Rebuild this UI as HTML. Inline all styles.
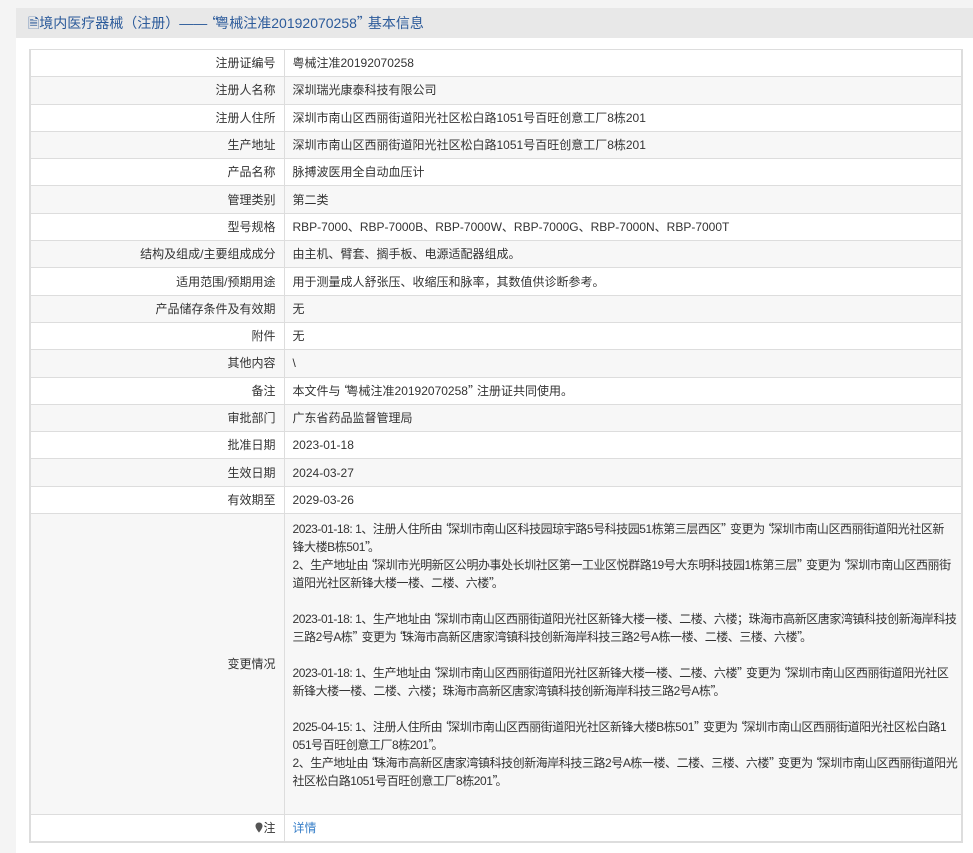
<!DOCTYPE html>
<html><head><meta charset="utf-8"><style>
body{margin:0;background:#f4f4f4;font-family:"Liberation Sans","Noto Sans CJK SC",sans-serif;font-size:12px;color:#333;width:973px;height:853px;overflow:hidden}
.q{font-family:"Noto Sans CJK SC",sans-serif;letter-spacing:-3px}
.o{margin-left:-3px}
.panel{position:absolute;left:16px;top:8px;width:957px;height:845px;background:#fff}
.hd{height:30px;background:#e8e8e8;color:#2b5a9a;font-size:14px;line-height:30px;padding-left:12px}
table{position:absolute;left:13px;top:41px;width:934px;border-collapse:collapse;border:2px solid #ddd;border-top:1px solid #ddd;table-layout:fixed}
td{border:1px solid #ddd;height:26.3px;padding:0 8px;vertical-align:middle;white-space:nowrap;line-height:16px;overflow:hidden}
td.l{text-align:right}
tr:nth-child(even){background:#f7f7f7}
.ch{line-height:18px;padding:6px 8px 24px;letter-spacing:-0.45px}
a{color:#3a80c9;text-decoration:none}
</style></head><body>
<div class="panel">
<div class="hd">🗎境内医疗器械（注册）——<span class="q o">“</span>粤械注准20192070258<span class="q">”</span>基本信息</div>
<table>
<colgroup><col style="width:254px"><col></colgroup>
<tr><td class="l">注册证编号</td><td>粤械注准20192070258</td></tr>
<tr><td class="l">注册人名称</td><td>深圳瑞光康泰科技有限公司</td></tr>
<tr><td class="l">注册人住所</td><td>深圳市南山区西丽街道阳光社区松白路1051号百旺创意工厂8栋201</td></tr>
<tr><td class="l">生产地址</td><td>深圳市南山区西丽街道阳光社区松白路1051号百旺创意工厂8栋201</td></tr>
<tr><td class="l">产品名称</td><td>脉搏波医用全自动血压计</td></tr>
<tr><td class="l">管理类别</td><td>第二类</td></tr>
<tr><td class="l">型号规格</td><td>RBP-7000、RBP-7000B、RBP-7000W、RBP-7000G、RBP-7000N、RBP-7000T</td></tr>
<tr><td class="l">结构及组成/主要组成成分</td><td>由主机、臂套、搁手板、电源适配器组成。</td></tr>
<tr><td class="l">适用范围/预期用途</td><td>用于测量成人舒张压、收缩压和脉率，其数值供诊断参考。</td></tr>
<tr><td class="l">产品储存条件及有效期</td><td>无</td></tr>
<tr><td class="l">附件</td><td>无</td></tr>
<tr><td class="l">其他内容</td><td>\</td></tr>
<tr><td class="l">备注</td><td>本文件与<span class="q o">“</span>粤械注准20192070258<span class="q">”</span>注册证共同使用。</td></tr>
<tr><td class="l">审批部门</td><td>广东省药品监督管理局</td></tr>
<tr><td class="l">批准日期</td><td>2023-01-18</td></tr>
<tr><td class="l">生效日期</td><td>2024-03-27</td></tr>
<tr><td class="l">有效期至</td><td>2029-03-26</td></tr>
<tr><td class="l">变更情况</td><td class="ch">2023-01-18: 1、注册人住所由<span class="q o">“</span>深圳市南山区科技园琼宇路5号科技园51栋第三层西区<span class="q">”</span>变更为<span class="q o">“</span>深圳市南山区西丽街道阳光社区新<br>锋大楼B栋501<span class="q">”</span>。<br>2、生产地址由<span class="q o">“</span>深圳市光明新区公明办事处长圳社区第一工业区悦群路19号大东明科技园1栋第三层<span class="q">”</span>变更为<span class="q o">“</span>深圳市南山区西丽街<br>道阳光社区新锋大楼一楼、二楼、六楼<span class="q">”</span>。<br><br>2023-01-18: 1、生产地址由<span class="q o">“</span>深圳市南山区西丽街道阳光社区新锋大楼一楼、二楼、六楼；珠海市高新区唐家湾镇科技创新海岸科技<br>三路2号A栋<span class="q">”</span>变更为<span class="q o">“</span>珠海市高新区唐家湾镇科技创新海岸科技三路2号A栋一楼、二楼、三楼、六楼<span class="q">”</span>。<br><br>2023-01-18: 1、生产地址由<span class="q o">“</span>深圳市南山区西丽街道阳光社区新锋大楼一楼、二楼、六楼<span class="q">”</span>变更为<span class="q o">“</span>深圳市南山区西丽街道阳光社区<br>新锋大楼一楼、二楼、六楼；珠海市高新区唐家湾镇科技创新海岸科技三路2号A栋<span class="q">”</span>。<br><br>2025-04-15: 1、注册人住所由<span class="q o">“</span>深圳市南山区西丽街道阳光社区新锋大楼B栋501<span class="q">”</span>变更为<span class="q o">“</span>深圳市南山区西丽街道阳光社区松白路1<br>051号百旺创意工厂8栋201<span class="q">”</span>。<br>2、生产地址由<span class="q o">“</span>珠海市高新区唐家湾镇科技创新海岸科技三路2号A栋一楼、二楼、三楼、六楼<span class="q">”</span>变更为<span class="q o">“</span>深圳市南山区西丽街道阳光<br>社区松白路1051号百旺创意工厂8栋201<span class="q">”</span>。</td></tr>
<tr><td class="l"><svg width="8" height="11" viewBox="0 0 8 11" style="vertical-align:-1px"><path d="M4 0.5C1.9 0.5 0.5 2 0.5 4c0 2.5 3.5 6.5 3.5 6.5S7.5 6.5 7.5 4C7.5 2 6.1 0.5 4 0.5z" fill="#555"/></svg>注</td><td><a>详情</a></td></tr>
</table>
</div>
</body></html>
